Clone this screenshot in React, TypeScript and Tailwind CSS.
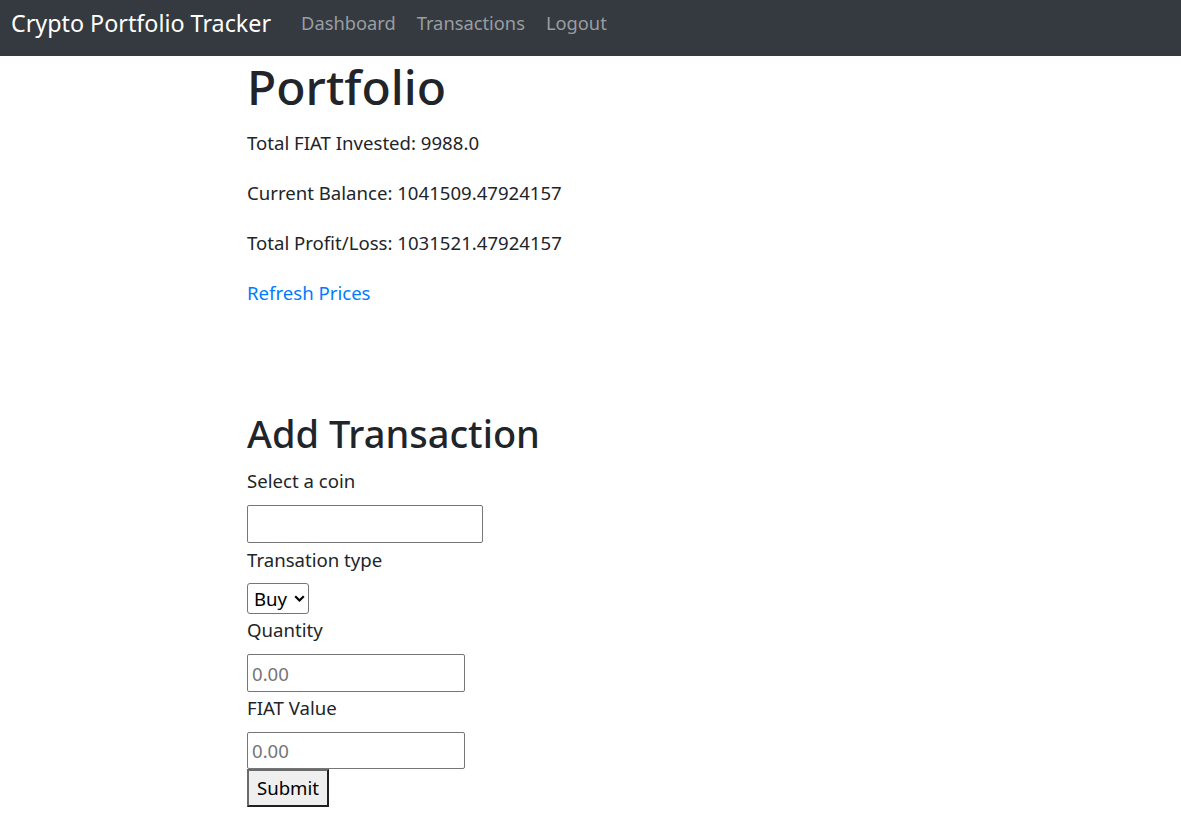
import React from "react";

const font = { fontFamily: '"Noto Sans", "Open Sans", Arial, sans-serif' };

export default function App() {
  return (
    <div className="min-h-[822px] bg-white text-[#212529]" style={font}>
      <nav className="h-[56px] bg-[#343a40] flex items-start pt-[11px] pl-[11px]">
        <span className="text-[23.3px] leading-[24px] text-white">Crypto Portfolio Tracker</span>
        <div className="flex items-start ml-[30px] pt-[0px] gap-[21px] text-[18.3px] leading-[24px] text-[#9a9da0]">
          <a>Dashboard</a>
          <a>Transactions</a>
          <a>Logout</a>
        </div>
      </nav>
      <main className="ml-[247px] flex flex-col items-start">
        <h1 className="mt-[2px] text-[48px] leading-[58px] font-medium">Portfolio</h1>
        <p className="mt-[12px] text-[18.6px] leading-[30px]">Total FIAT Invested: 9988.0</p>
        <p className="mt-[20px] text-[18.6px] leading-[30px]">Current Balance: 1041509.47924157</p>
        <p className="mt-[20px] text-[18.6px] leading-[30px]">Total Profit/Loss: 1031521.47924157</p>
        <a className="mt-[20px] text-[18.6px] leading-[30px] text-[#007bff]">Refresh Prices</a>

        <h2 className="mt-[102px] text-[38px] leading-[46px] font-medium">Add Transaction</h2>
        <label className="mt-[10px] text-[18.6px] leading-[30px]">Select a coin</label>
        <input
          type="text"
          className="mt-[9px] w-[236px] h-[38px] border border-[#767676] rounded-[2px] px-[4px] text-[18.6px] bg-white"
        />
        <label className="mt-[2px] text-[18.6px] leading-[30px]">Transation type</label>
        <div className="relative mt-[8px] w-[62px] h-[31px]">
          <select className="appearance-none w-full h-full border border-[#767676] rounded-[3px] pl-[6px] text-[18.6px] leading-[29px] bg-white text-black">
            <option>Buy</option>
            <option>Sell</option>
          </select>
          <svg className="absolute pointer-events-none left-[47px] top-[12px]" width="11" height="8" viewBox="0 0 11 8">
            <path d="M1.2 1.2 L5.5 5.5 L9.8 1.2" fill="none" stroke="#000" strokeWidth="2.2" />
          </svg>
        </div>
        <label className="mt-[1px] text-[18.6px] leading-[30px]">Quantity</label>
        <input
          type="text"
          placeholder="0.00"
          className="mt-[9px] w-[218px] h-[38px] border border-[#767676] rounded-[2px] px-[4px] text-[18.6px] bg-white placeholder:text-[#757575]"
        />
        <label className="mt-[1px] text-[18.6px] leading-[30px]">FIAT Value</label>
        <input
          type="text"
          placeholder="0.00"
          className="mt-[9px] w-[218px] h-[37px] border border-[#767676] rounded-[2px] px-[4px] text-[18.6px] bg-white placeholder:text-[#757575]"
        />
        <button className="w-[82px] h-[38px] bg-[#efefef] border-2 border-t-[#6b6b6b] border-l-[#6b6b6b] border-r-[#202020] border-b-[#202020] text-[18.6px] leading-[34px] text-black">
          Submit
        </button>
      </main>
    </div>
  );
}
